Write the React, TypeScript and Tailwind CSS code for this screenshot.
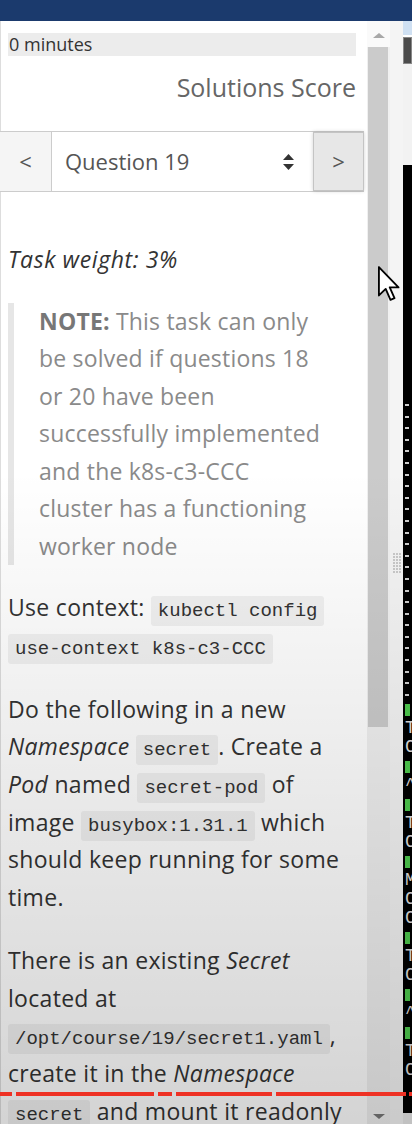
import React from "react";

function Code({ children }: { children: React.ReactNode }) {
  return (
    <code className="rounded-[3px] bg-[#f1f1f1] px-[7px] py-[4px] font-['Liberation_Mono',monospace] text-[19px] leading-none tracking-normal text-[#333]">
      {children}
    </code>
  );
}

function UpDown() {
  return (
    <svg width="11" height="16" viewBox="0 0 11 16" className="text-[#333]">
      <path d="M5.5 0 L11 6 H0 Z" fill="currentColor" />
      <path d="M5.5 16 L11 10 H0 Z" fill="currentColor" />
    </svg>
  );
}

function Cursor() {
  return (
    <svg width="22" height="36" viewBox="0 0 12 19.5">
      <path
        d="M0.5 0.5 L0.5 16 L4.2 12.4 L6.8 18.4 L9 17.5 L6.4 11.6 L11.2 11.6 Z"
        fill="white"
        stroke="black"
        strokeWidth="1"
        strokeLinejoin="round"
      />
    </svg>
  );
}

// terminal glyph rows peeking in at the right edge
const termRows: { ch: string; green?: boolean }[] = [
  { ch: "", green: true },
  { ch: "T" },
  { ch: "C" },
  { ch: "", green: true },
  { ch: "^" },
  { ch: "", green: true },
  { ch: "T" },
  { ch: "C" },
  { ch: "", green: true },
  { ch: "M" },
  { ch: "C" },
  { ch: "C" },
  { ch: "", green: true },
  { ch: "T" },
  { ch: "C" },
  { ch: "", green: true },
  { ch: "^" },
  { ch: "", green: true },
  { ch: "T" },
  { ch: "C" },
];

const segments = [
  [0, 12],
  [16, 154],
  [158, 172],
  [176, 272],
  [276, 406],
  [409, 412],
];

export default function App() {
  return (
    <div className="relative h-[1124px] w-[412px] overflow-hidden bg-white font-['Open_Sans',sans-serif] text-[#333]">
      <div className="h-[21px] bg-[#1b3a6d]" />

      <div className="flex h-[1103px]">
        {/* question panel */}
        <main className="w-[367px] border-l border-[#ddd] pl-[7px] pr-[11px] pt-[12px]">
          <div className="h-[23px] bg-[#ececec] pl-[1px] text-[18px] leading-[23px] text-[#333]">
            0 minutes
          </div>

          <div className="mt-[15px] text-right text-[25px] leading-[32px] text-[#666]">
            Solutions Score
          </div>

          <div className="-ml-[8px] -mr-[8px] mt-[28px] flex h-[61px] border-y border-[#ccc] text-[22px] text-[#555]">
            <button className="flex w-[51px] items-center justify-center bg-[#f5f5f5]">
              &lt;
            </button>
            <div className="flex flex-1 items-center justify-between border-l border-[#ccc] bg-white pl-[13px] pr-[19px]">
              <span>Question 19</span>
              <UpDown />
            </div>
            <button className="flex w-[51px] items-center justify-center border border-[#c4c4c4] bg-[#e7e7e7] shadow-[0_0_4px_rgba(0,0,0,0.18)]">
              &gt;
            </button>
          </div>

          <div className="text-[23px] leading-[37.7px] tracking-[0.3px]">
            <p className="mt-[49px] italic tracking-[0.6px]">Task weight: 3%</p>

            <blockquote className="mt-[24px] border-l-[6px] border-[#e6e6e6] pl-[25px] leading-[37.5px] tracking-[0.2px] text-[#8a8a8a]">
              <strong className="font-bold text-[#777]">NOTE:</strong> This task can only
              <br />
              be solved if questions 18
              <br />
              or 20 have been
              <br />
              successfully implemented
              <br />
              and the k8s-c3-CCC
              <br />
              cluster has a functioning
              <br />
              worker node
            </blockquote>

            <p className="mt-[24px] whitespace-nowrap">
              Use context: <Code>kubectl config</Code>
              <br />
              <Code>use-context k8s-c3-CCC</Code>
            </p>

            <p className="mt-[26px] whitespace-nowrap">
              Do the following in a new
              <br />
              <em>Namespace</em> <Code>secret</Code>. Create a
              <br />
              <em>Pod</em> named <Code>secret-pod</Code> of
              <br />
              image <Code>busybox:1.31.1</Code> which
              <br />
              should keep running for some
              <br />
              time.
            </p>

            <p className="mt-[25px] whitespace-nowrap">
              There is an existing <em>Secret</em>
              <br />
              located at
              <br />
              <Code>/opt/course/19/secret1.yaml</Code>,
              <br />
              create it in the <em>Namespace</em>
              <br />
              <Code>secret</Code> and mount it readonly
            </p>
          </div>
        </main>

        {/* scrollbar */}
        <div className="flex w-[23px] flex-col bg-[#f0f0f0]">
          <div className="flex h-[26px] items-start justify-center bg-[#fafafa] pt-[12px]">
            <div className="h-0 w-0 border-x-[6px] border-b-[5px] border-x-transparent border-b-[#a8a8a8]" />
          </div>
          <div className="ml-[1px] mr-[2px] h-[680px] bg-[#cbcbcb]" />
          <div className="flex-1" />
          <div className="flex h-[10px] items-start justify-center">
            <div className="h-0 w-0 border-x-[6px] border-t-[5px] border-x-transparent border-t-[#777]" />
          </div>
        </div>

        {/* splitter */}
        <div className="flex w-[13px] flex-col items-center bg-[#f4f4f4] pt-[532px]">
          <div className="grid grid-cols-3 gap-[1px]">
            {Array.from({ length: 21 }).map((_, i) => (
              <div key={i} className="h-[2px] w-[2px] bg-[#c9c9c9]" />
            ))}
          </div>
        </div>

        {/* terminal edge */}
        <div className="flex w-[9px] flex-col">
          <div className="h-[14px] bg-[#cfe0f2]" />
          <div className="mt-[2px] h-[27px] border border-[#888] bg-[#4b4b4b]" />
          <div className="h-[101px] bg-[#f2f2f2]" />
          <div className="flex h-[948px] flex-col bg-black pl-[2px] pt-[235px] font-['Liberation_Mono',monospace] text-[18px] leading-[19px] text-[#ddd]">
            <div className="flex h-[300px] flex-col gap-[9.6px] pt-[4px]">
              {Array.from({ length: 26 }).map((_, i) => (
                <div key={i} className="h-[2px] w-[4px] bg-[#cfcfcf]" />
              ))}
            </div>
            {termRows.map((r, i) => (
              <div key={i} className="h-[19px] overflow-hidden">
                {r.green ? (
                  <div className="mt-[4px] h-[12px] w-[5px] bg-[#4ec94e]" />
                ) : (
                  r.ch
                )}
              </div>
            ))}
          </div>
          <div className="flex-1 bg-[#e8e8e8]" />
        </div>
      </div>

      {/* video fade */}
      <div className="pointer-events-none absolute inset-x-0 bottom-0 top-[470px] bg-linear-to-b from-transparent to-black/[0.17]" />

      {/* progress bar */}
      <div className="pointer-events-none absolute left-0 top-[1092px] h-[4px] w-[412px]">
        {segments.map(([a, b]) => (
          <div
            key={a}
            className="absolute top-0 h-[4px] bg-[#ee3124]"
            style={{ left: a, width: b - a }}
          />
        ))}
      </div>

      {/* mouse pointer */}
      <div className="pointer-events-none absolute left-[378px] top-[266px]">
        <Cursor />
      </div>
    </div>
  );
}
